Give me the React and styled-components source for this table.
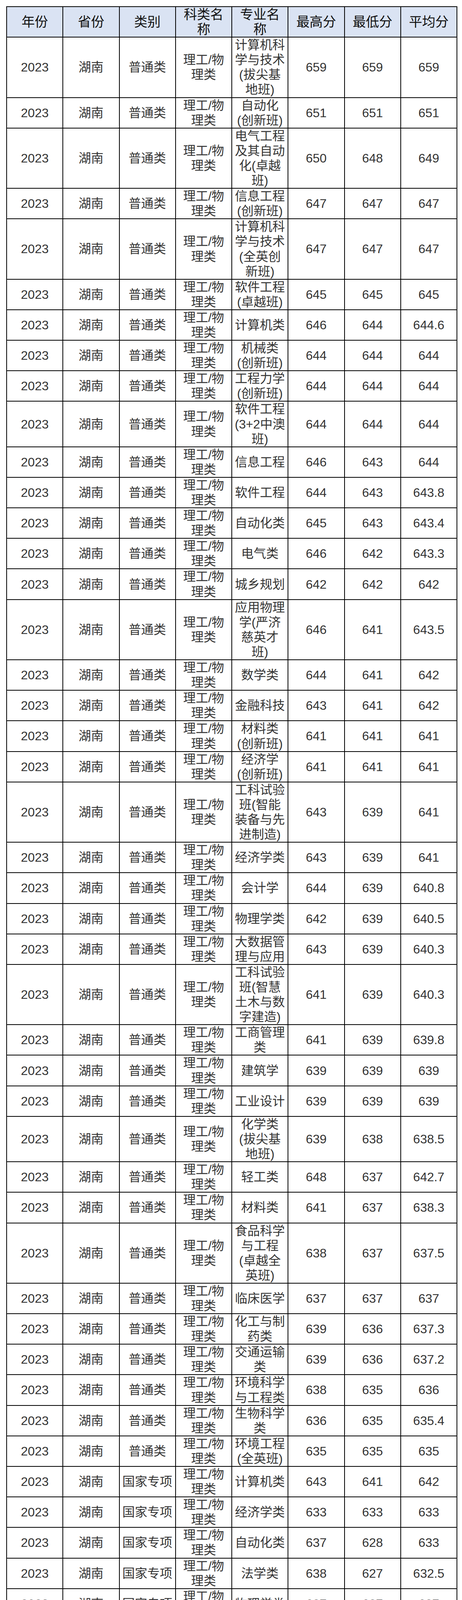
import React from 'react'
import styled, { createGlobalStyle } from 'styled-components'

const GlobalStyle = createGlobalStyle`
	html, body {
		margin: 0;
		padding: 0;
		background: #fff;
	}
	body {
		font-family: 'Liberation Sans', 'Noto Sans CJK SC', sans-serif;
	}
`

const Page = styled.div`
	width: 1184px;
	box-sizing: border-box;
	padding: 16px 12px 16px 16px;
`

const Table = styled.table`
	width: 1156px;
	border-collapse: collapse;
	table-layout: fixed;
`

const HeadCell = styled.th`
	border: 2px solid #000;
	background: #dae3f3;
	color: #111;
	font-size: 34px;
	font-weight: 400;
	line-height: 38.1px;
	padding: 0 6px;
	text-align: center;
	vertical-align: middle;
`

const Cell = styled.td`
	border: 2px solid #000;
	color: #333;
	font-size: 32px;
	line-height: 38.1px;
	padding: 0 6px;
	text-align: center;
	vertical-align: middle;
`

const headers = ['年份', '省份', '类别', '科类名称', '专业名称', '最高分', '最低分', '平均分']

// [类别, 专业名称, 最高分, 最低分, 平均分]
const rows = [
	['普通类', '计算机科学与技术(拔尖基地班)', '659', '659', '659'],
	['普通类', '自动化(创新班)', '651', '651', '651'],
	['普通类', '电气工程及其自动化(卓越班)', '650', '648', '649'],
	['普通类', '信息工程(创新班)', '647', '647', '647'],
	['普通类', '计算机科学与技术(全英创新班)', '647', '647', '647'],
	['普通类', '软件工程(卓越班)', '645', '645', '645'],
	['普通类', '计算机类', '646', '644', '644.6'],
	['普通类', '机械类(创新班)', '644', '644', '644'],
	['普通类', '工程力学(创新班)', '644', '644', '644'],
	['普通类', '软件工程(3+2中澳班)', '644', '644', '644'],
	['普通类', '信息工程', '646', '643', '644'],
	['普通类', '软件工程', '644', '643', '643.8'],
	['普通类', '自动化类', '645', '643', '643.4'],
	['普通类', '电气类', '646', '642', '643.3'],
	['普通类', '城乡规划', '642', '642', '642'],
	['普通类', '应用物理学(严济慈英才班)', '646', '641', '643.5'],
	['普通类', '数学类', '644', '641', '642'],
	['普通类', '金融科技', '643', '641', '642'],
	['普通类', '材料类(创新班)', '641', '641', '641'],
	['普通类', '经济学(创新班)', '641', '641', '641'],
	['普通类', '工科试验班(智能装备与先进制造)', '643', '639', '641'],
	['普通类', '经济学类', '643', '639', '641'],
	['普通类', '会计学', '644', '639', '640.8'],
	['普通类', '物理学类', '642', '639', '640.5'],
	['普通类', '大数据管理与应用', '643', '639', '640.3'],
	['普通类', '工科试验班(智慧土木与数字建造)', '641', '639', '640.3'],
	['普通类', '工商管理类', '641', '639', '639.8'],
	['普通类', '建筑学', '639', '639', '639'],
	['普通类', '工业设计', '639', '639', '639'],
	['普通类', '化学类(拔尖基地班)', '639', '638', '638.5'],
	['普通类', '轻工类', '648', '637', '642.7'],
	['普通类', '材料类', '641', '637', '638.3'],
	['普通类', '食品科学与工程(卓越全英班)', '638', '637', '637.5'],
	['普通类', '临床医学', '637', '637', '637'],
	['普通类', '化工与制药类', '639', '636', '637.3'],
	['普通类', '交通运输类', '639', '636', '637.2'],
	['普通类', '环境科学与工程类', '638', '635', '636'],
	['普通类', '生物科学类', '636', '635', '635.4'],
	['普通类', '环境工程(全英班)', '635', '635', '635'],
	['国家专项', '计算机类', '643', '641', '642'],
	['国家专项', '经济学类', '633', '633', '633'],
	['国家专项', '自动化类', '637', '628', '633'],
	['国家专项', '法学类', '638', '627', '632.5'],
	['国家专项', '物理学类', '627', '627', '627'],
	['国家专项', '生物科学类', '624', '624', '624'],
	['国家专项', '食品科学与工程类', '624', '624', '624'],
	['国家专项', '船舶与海洋工程', '630', '623', '625.5'],
	['国家专项', '行政管理', '623', '623', '623'],
	['国家专项', '旅游管理类', '623', '622', '622.5'],
	['国家专项', '材料类', '624', '620', '621.5'],
	['国家专项', '化工与制药类', '617', '616', '616.5'],
	['高校专项', '数学类', '626', '626', '626'],
	['高校专项', '材料类', '626', '626', '626'],
	['高校专项', '物理学类', '626', '626', '626'],
	['高校专项', '生物科学类', '625', '625', '625'],
	['高校专项', '轻工类', '625', '625', '625'],
	['高校专项', '化工与制药类', '624', '624', '624'],
	['高校专项', '食品科学与工程类', '624', '624', '624'],
	['高校专项', '船舶与海洋工程', '626', '623', '624.5'],
	['高校专项', '环境科学与工程类', '621', '621', '621'],
]

const App = () => (
	<Page>
		<GlobalStyle />
		<Table>
			<thead>
				<tr>{
					headers.map(h => <HeadCell key={h}>{h}</HeadCell>)
				}</tr>
			</thead>
			<tbody>{
				rows.map(([type, major, max, min, avg], i) => (
					<tr key={i}>
						<Cell>2023</Cell>
						<Cell>湖南</Cell>
						<Cell>{type}</Cell>
						<Cell>理工/物理类</Cell>
						<Cell>{major}</Cell>
						<Cell>{max}</Cell>
						<Cell>{min}</Cell>
						<Cell>{avg}</Cell>
					</tr>
				))
			}</tbody>
		</Table>
	</Page>
)

export default App
